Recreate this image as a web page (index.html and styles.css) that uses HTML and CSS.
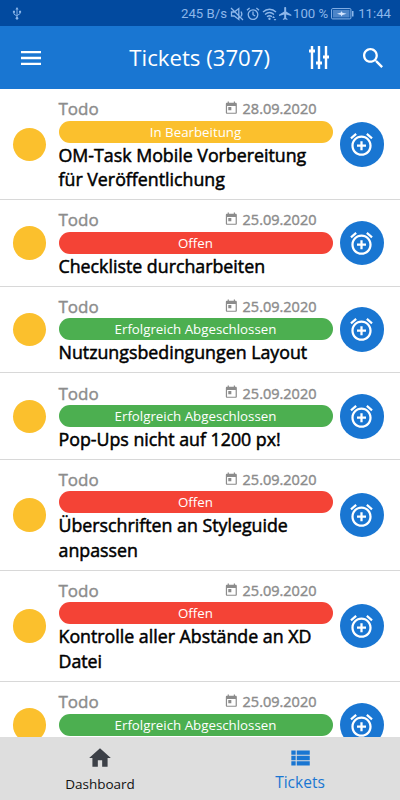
FILE: index.html
```html
<!DOCTYPE html>
<html lang="de">
<head>
  <meta charset="UTF-8">
  <meta name="viewport" content="width=device-width, initial-scale=1">
  <title>Tickets</title>
  <link rel="stylesheet" href="styles.css">
</head>
<body>

  <!-- Icon set -->
  <svg class="sprite" width="0" height="0">
    <symbol id="alarm-add" viewBox="0 0 24 24">
      <path d="M7.88 3.39L6.6 1.86 2 5.71l1.29 1.53 4.59-3.85zM22 5.72l-4.6-3.86-1.29 1.53 4.6 3.86L22 5.72zM12 4c-4.97 0-9 4.03-9 9s4.02 9 9 9c4.97 0 9-4.03 9-9s-4.03-9-9-9zm0 16c-3.87 0-7-3.13-7-7s3.13-7 7-7 7 3.13 7 7-3.13 7-7 7zm1-11h-2v3H8v2h3v3h2v-3h3v-2h-3V9z"/>
    </symbol>
    <symbol id="today" viewBox="0 0 24 24">
      <path d="M19 3h-1V1h-2v2H8V1H6v2H5c-1.11 0-1.99.9-1.99 2L3 19c0 1.1.89 2 2 2h14c1.1 0 2-.9 2-2V5c0-1.1-.9-2-2-2zm0 16H5V8h14v11zM7 10h5v5H7z"/>
    </symbol>
  </svg>

  <div class="app">
    <div class="status-bar">
      <svg class="usb" viewBox="0 0 10 14">
        <path d="M5 2v10M1.7 5v2.6L5 9.8M8.3 5v2.2L5 9.2" fill="none" stroke="currentColor" stroke-width="1"/>
        <path d="M5 0l1.7 2.8H3.3zM.6 4h2.2v2.2H.6zM7.2 4h2.2v2.2H7.2z"/>
        <circle cx="5" cy="12.2" r="1.4"/>
      </svg>
      <span class="speed">245 B/s</span>
      <svg class="mute" viewBox="0 0 14 14">
        <path d="M1.5 5h2.8L8.8 1.5v11L4.3 9H1.5zM1 1l12 12M11 4.5c1 1.5 1 3.5 0 5" fill="none" stroke="currentColor" stroke-width="1.3"/>
      </svg>
      <svg class="alarm" viewBox="0 0 14 14">
        <path d="M7 4.5v3.2l2.2 1.3M1 3.3L3.6 1M13 3.3L10.4 1" fill="none" stroke="currentColor" stroke-width="1.3"/>
        <circle cx="7" cy="7.6" r="4.8" fill="none" stroke="currentColor" stroke-width="1.3"/>
      </svg>
      <svg class="wifi" viewBox="0 0 15 14">
        <path d="M1 5c3.8-3.6 9.2-3.6 13 0M3 7.5c2.8-2.5 6.2-2.5 9 0M5 9.8c1.6-1.3 3.4-1.3 5 0" fill="none" stroke="currentColor" stroke-width="1.4"/>
        <circle cx="7.5" cy="11.7" r="1.2"/>
        <path d="M10.2 11l1.4-2 1.4 2zM11.6 12h2.8L13 13.8z"/>
      </svg>
      <svg class="plane" viewBox="2 2 20 20">
        <path d="M21 16v-2l-8-5V3.5c0-.83-.67-1.5-1.5-1.5S10 2.67 10 3.5V9l-8 5v2l8-2.5V19l-2 1.5V22l3.5-1 3.5 1v-1.5L13 19v-5.5l8 2.5z"/>
      </svg>
      <span class="percent">100 %</span>
      <svg class="battery" viewBox="0 0 23 12">
        <rect x=".6" y=".6" width="19.3" height="10.3" rx="1" fill="none" stroke="currentColor" stroke-width="1"/>
        <rect x="2" y="2" width="16.5" height="7.5" opacity=".55"/>
        <rect x="21" y="3" width="1.5" height="5.5"/>
        <path d="M6 5.8L10 4.6V3l1.5 1.7 4 1-4 1.2L10 8.500V7z" fill="#d5e6ff"/>
      </svg>
      <span class="clock">11:44</span>
    </div>

    <header class="toolbar">
      <svg class="menu-icon" viewBox="3 6 18 12" preserveAspectRatio="none"><path d="M3 18h18v-2H3v2zm0-5h18v-2H3v2zm0-7v2h18V6H3z"/></svg>
      <h1>Tickets (3707)</h1>
      <svg class="filter-icon" viewBox="0 0 20 23">
        <path d="M1.800 0h2.400v3.500H6v3H4.200V23H1.800V6.500H0v-3h1.800zM8.800 0h2.400v15.500H13v3h-1.800V23H8.800v-4.500H7v-3h1.800zM15.800 0h2.400v9.500H20v3h-1.800V23h-2.400V12.500H14v-3h1.800z"/>
      </svg>
      <svg class="search-icon" viewBox="3 3 17.5 17.5"><path d="M15.5 14h-.79l-.28-.27C15.41 12.59 16 11.11 16 9.5 16 5.91 13.09 3 9.5 3S3 5.91 3 9.5 5.91 16 9.5 16c1.61 0 3.09-.59 4.23-1.57l.27.28v.79l5 4.99L20.490 19l-4.99-5zm-6 0C7.01 14 5 11.99 5 9.5S7.01 5 9.5 5 14 7.01 14 9.5 11.99 14 9.5 14z"/></svg>
    </header>

    <main class="tickets">
      <article class="ticket">
        <span class="dot"></span>
        <div class="info">
          <div class="meta"><span class="state">Todo</span><svg><use href="#today"/></svg><time>28.09.2020</time></div>
          <div class="badge progress">In Bearbeitung</div>
          <h2>OM-Task Mobile Vorbereitung<br>für Veröffentlichung</h2>
        </div>
        <button class="add"><svg><use href="#alarm-add"/></svg></button>
      </article>

      <article class="ticket">
        <span class="dot"></span>
        <div class="info">
          <div class="meta"><span class="state">Todo</span><svg><use href="#today"/></svg><time>25.09.2020</time></div>
          <div class="badge open">Offen</div>
          <h2>Checkliste durcharbeiten</h2>
        </div>
        <button class="add"><svg><use href="#alarm-add"/></svg></button>
      </article>

      <article class="ticket">
        <span class="dot"></span>
        <div class="info">
          <div class="meta"><span class="state">Todo</span><svg><use href="#today"/></svg><time>25.09.2020</time></div>
          <div class="badge done">Erfolgreich Abgeschlossen</div>
          <h2>Nutzungsbedingungen Layout</h2>
        </div>
        <button class="add"><svg><use href="#alarm-add"/></svg></button>
      </article>

      <article class="ticket">
        <span class="dot"></span>
        <div class="info">
          <div class="meta"><span class="state">Todo</span><svg><use href="#today"/></svg><time>25.09.2020</time></div>
          <div class="badge done">Erfolgreich Abgeschlossen</div>
          <h2>Pop-Ups nicht auf 1200 px!</h2>
        </div>
        <button class="add"><svg><use href="#alarm-add"/></svg></button>
      </article>

      <article class="ticket">
        <span class="dot"></span>
        <div class="info">
          <div class="meta"><span class="state">Todo</span><svg><use href="#today"/></svg><time>25.09.2020</time></div>
          <div class="badge open">Offen</div>
          <h2>Überschriften an Styleguide<br>anpassen</h2>
        </div>
        <button class="add"><svg><use href="#alarm-add"/></svg></button>
      </article>

      <article class="ticket">
        <span class="dot"></span>
        <div class="info">
          <div class="meta"><span class="state">Todo</span><svg><use href="#today"/></svg><time>25.09.2020</time></div>
          <div class="badge open">Offen</div>
          <h2>Kontrolle aller Abstände an XD<br>Datei</h2>
        </div>
        <button class="add"><svg><use href="#alarm-add"/></svg></button>
      </article>

      <article class="ticket">
        <span class="dot"></span>
        <div class="info">
          <div class="meta"><span class="state">Todo</span><svg><use href="#today"/></svg><time>25.09.2020</time></div>
          <div class="badge done">Erfolgreich Abgeschlossen</div>
          <h2>&nbsp;</h2>
        </div>
        <button class="add"><svg><use href="#alarm-add"/></svg></button>
      </article>
    </main>

    <nav class="tabs">
      <a class="tab">
        <svg viewBox="0 0 24 24"><path d="M10 20v-6h4v6h5v-8h3L12 3 2 12h3v8z"/></svg>
        <span>Dashboard</span>
      </a>
      <a class="tab active">
        <svg viewBox="0 0 24 24"><path d="M4 14h4v-4H4v4zm0 5h4v-4H4v4zM4 9h4V5H4v4zm5 5h12v-4H9v4zm0 5h12v-4H9v4zM9 5v4h12V5H9z"/></svg>
        <span>Tickets</span>
      </a>
    </nav>
  </div>

</body>
</html>
```

FILE: styles.css
```css
* {
  box-sizing: border-box;
}
body {
  margin: 0;
  font-family: "Open Sans", "Noto Sans", sans-serif;
  background: #fff;
}
svg {
  display: block;
  flex: none;
  fill: currentColor;
}
.sprite {
  position: absolute;
}
.app {
  height: 800px;
  display: flex;
  flex-direction: column;
  overflow: hidden;
}

/* Status bar */
.status-bar {
  flex: none;
  height: 26px;
  padding: 1px 9px 0 12px;
  display: flex;
  align-items: center;
  background: #024a9f;
  color: #8db7ea;
  font-family: Roboto, sans-serif;
  font-size: 13.2px;
  white-space: nowrap;
}
.usb {
  width: 10px;
  height: 13px;
}
.speed {
  margin-left: auto;
}
.mute {
  width: 14px;
  height: 14px;
  margin-left: 3px;
}
.alarm {
  width: 14px;
  height: 14px;
  margin-left: 2px;
}
.wifi {
  width: 15px;
  height: 14px;
  margin-left: 2px;
}
.plane {
  width: 13px;
  height: 13px;
  margin: 0 1px 0 2px;
}
.battery {
  width: 23px;
  height: 12px;
  margin: 0 4px 0 3px;
}

/* Toolbar */
.toolbar {
  flex: none;
  height: 63px;
  padding: 0 17px 0 21px;
  display: flex;
  align-items: center;
  background: #1976d2;
  color: #fff;
}
.toolbar h1 {
  margin: 0 39px 0 auto;
  font-size: 22.2px;
  font-weight: 400;
  line-height: 30px;
}
.menu-icon {
  width: 20px;
  height: 14px;
}
.filter-icon {
  width: 20px;
  height: 23px;
}
.search-icon {
  width: 20px;
  height: 20px;
  margin-left: 34px;
}

/* Ticket list */
.tickets {
  flex: 1;
  min-height: 0;
  overflow: hidden;
}
.ticket {
  display: flex;
  align-items: center;
  padding: 8px 16px 7.6px 12.5px;
  border-bottom: 1px solid #d8d8d8;
}
.dot {
  flex: none;
  width: 33.5px;
  height: 33.5px;
  border-radius: 50%;
  background: #fbc02d;
}
.info {
  flex: none;
  width: 274px;
  margin-left: 12.5px;
}
.meta {
  display: flex;
  align-items: center;
  height: 23.5px;
  padding-right: 16px;
  color: #8c8c8c;
  -webkit-text-stroke: 0.4px currentColor;
}
.state {
  font-size: 17px;
}
.meta svg {
  width: 14.7px;
  height: 14.7px;
  margin: 0 3.5px 1px auto;
}
.meta time {
  font-size: 14.5px;
}
.badge {
  height: 22px;
  border-radius: 11px;
  color: #fff;
  font-size: 13.3px;
  line-height: 23px;
  text-align: center;
}
.progress {
  background: #fbc02d;
}
.open {
  background: #f44336;
}
.done {
  background: #4caf50;
}
.ticket h2 {
  margin: 0;
  color: #000;
  font-size: 17.8px;
  font-weight: 400;
  line-height: 24.5px;
  white-space: nowrap;
  -webkit-text-stroke: 0.5px #000;
}
.add {
  flex: none;
  width: 44.5px;
  height: 44.5px;
  margin-left: 7px;
  padding: 0;
  display: flex;
  align-items: center;
  justify-content: center;
  border: none;
  border-radius: 50%;
  background: #1976d2;
  color: #fff;
}
.add svg {
  width: 27px;
  height: 27px;
}

/* Bottom navigation */
.tabs {
  flex: none;
  height: 63px;
  display: flex;
  background: #dedede;
}
.tab {
  flex: 1;
  display: flex;
  flex-direction: column;
  align-items: center;
  padding-top: 8px;
  color: #111;
  font-size: 13.5px;
}
.tab svg {
  width: 26px;
  height: 26px;
  color: #3c4047;
}
.tab span {
  margin-top: 3px;
  line-height: 20px;
}
.tab.active {
  color: #1976d2;
  font-size: 15.5px;
}
.tab.active svg {
  color: #1976d2;
}
.tab.active span {
  margin-top: 1px;
}
```
